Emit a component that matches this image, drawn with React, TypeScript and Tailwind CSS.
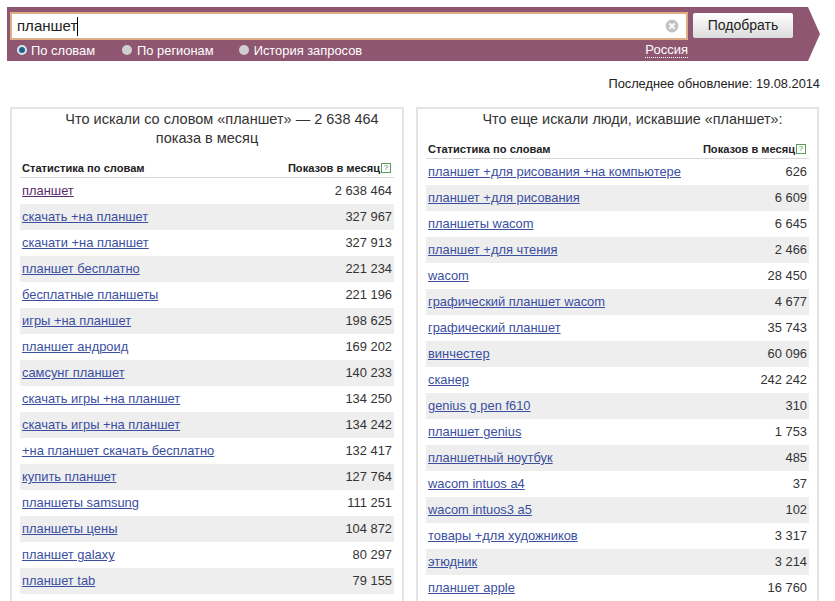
const leftRows: [string, string][] = [
  ["планшет", "2 638 464"],
  ["скачать +на планшет", "327 967"],
  ["скачати +на планшет", "327 913"],
  ["планшет бесплатно", "221 234"],
  ["бесплатные планшеты", "221 196"],
  ["игры +на планшет", "198 625"],
  ["планшет андроид", "169 202"],
  ["самсунг планшет", "140 233"],
  ["скачать игры +на планшет", "134 250"],
  ["скачать игры +на планшет", "134 242"],
  ["+на планшет скачать бесплатно", "132 417"],
  ["купить планшет", "127 764"],
  ["планшеты samsung", "111 251"],
  ["планшеты цены", "104 872"],
  ["планшет galaxy", "80 297"],
  ["планшет tab", "79 155"],
];
const rightRows: [string, string][] = [
  ["планшет +для рисования +на компьютере", "626"],
  ["планшет +для рисования", "6 609"],
  ["планшеты wacom", "6 645"],
  ["планшет +для чтения", "2 466"],
  ["wacom", "28 450"],
  ["графический планшет wacom", "4 677"],
  ["графический планшет", "35 743"],
  ["винчестер", "60 096"],
  ["сканер", "242 242"],
  ["genius g pen f610", "310"],
  ["планшет genius", "1 753"],
  ["планшетный ноутбук", "485"],
  ["wacom intuos a4", "37"],
  ["wacom intuos3 a5", "102"],
  ["товары +для художников", "3 317"],
  ["этюдник", "3 214"],
  ["планшет apple", "16 760"],
];

function Table({ rows, visited }: { rows: [string, string][]; visited?: boolean }) {
  return (
    <div>
      <div className="flex h-[20px] items-center justify-between border-b border-[#d8d8d8] pl-[2px] pt-[2px] text-[11.1px] font-bold text-[#222]">
        <span>Статистика по словам</span>
        <span className="flex items-center gap-[1px]">
          Показов в месяц
          <span className="flex h-[10px] w-[10px] items-center justify-center border border-[#5a9a5a] text-[8px] font-normal leading-none text-[#4a8a4a]">?</span>
          <span className="w-[2px]" />
        </span>
      </div>
      {rows.map(([q, n], i) => (
        <div key={i} className={`flex h-[26px] items-center justify-between pl-[2px] pr-[2px] text-[12.9px] ${i % 2 === 1 ? "bg-[#eeeeee]" : "bg-white"}`}>
          <a className={`underline ${visited && i === 0 ? "text-[#5a2a6b]" : "text-[#3a4f9f]"}`}>{q}</a>
          <span className="text-[#333]">{n}</span>
        </div>
      ))}
    </div>
  );
}

function Radio({ on, label, className }: { on?: boolean; label: string; className: string }) {
  return (
    <span className={`flex items-center ${className}`}>
      <span className={`h-[10px] w-[10px] rounded-full ${on ? "border-[2px] border-[#dde6ee] bg-[#1e5f8e]" : "bg-[#cfcfcf]"}`} />
      {label}
    </span>
  );
}

export default function App() {
  return (
    <div className="relative h-[601px] w-[835px] overflow-hidden bg-white font-['Liberation_Sans',Arial,sans-serif]">
      <div className="ml-[7px] mt-[7px] flex h-[54px] w-[813px]">
        <div className="w-[800px] bg-[#8e5670] pl-[3px] pt-[5px]">
          <div className="flex items-start">
            <div className="flex h-[28px] w-[678px] items-center justify-between border-2 border-[#dcae85] bg-white pl-[5px] pr-[7px] text-[15px] text-[#222]">
              <span className="flex items-center">планшет<span className="h-[19px] w-[1px] bg-black" /></span>
              <svg width="14" height="14" viewBox="0 0 14 14">
                <circle cx="7" cy="7" r="6.5" fill="#c4c4c4" />
                <path d="M4.5 4.5l5 5M9.5 4.5l-5 5" stroke="#fff" strokeWidth="1.8" />
              </svg>
            </div>
            <div className="ml-[5px] mt-[1px] flex h-[25px] w-[100px] items-center justify-center rounded-[2px] bg-gradient-to-b from-white to-[#dcdcdc] text-[14px] text-[#222]">Подобрать</div>
          </div>
          <div className="flex h-[21px] items-center text-[12.9px] text-white">
            <Radio on label="По словам" className="ml-[7px] gap-[4px]" />
            <Radio label="По регионам" className="ml-[27px] gap-[5px]" />
            <Radio label="История запросов" className="ml-[25px] gap-[5px]" />
            <span className="ml-auto mr-[119px] border-b border-dotted border-white text-[13px] leading-[14px]">Россия</span>
          </div>
        </div>
        <svg width="13" height="54" viewBox="0 0 13 54">
          <path d="M0 0H1L13 27L1 54H0Z" fill="#8e5670" />
        </svg>
      </div>
      <div className="mr-[15px] mt-[15px] text-right text-[12.8px] leading-[16px] text-[#222]">Последнее обновление: 19.08.2014</div>
      <div className="ml-[10px] mt-[15px] flex gap-[12px]">
        <div className="h-[520px] w-[394px] border-2 border-[#e4e4e4] px-[8px]">
          <div className="pt-[1px] text-center text-[14.5px] leading-[19px] text-[#333]">
            <div className="pl-[30px]">Что искали со словом «планшет» — 2 638 464</div>
            <div>показа в месяц</div>
          </div>
          <div className="mt-[10px]"><Table rows={leftRows} visited /></div>
        </div>
        <div className="h-[520px] w-[403px] border-2 border-[#e4e4e4] px-[8px]">
          <div className="pl-[30px] pt-[1px] text-center text-[14.4px] leading-[19px] text-[#333]">Что еще искали люди, искавшие «планшет»:</div>
          <div className="mt-[10px]"><Table rows={rightRows} /></div>
        </div>
      </div>
    </div>
  );
}
